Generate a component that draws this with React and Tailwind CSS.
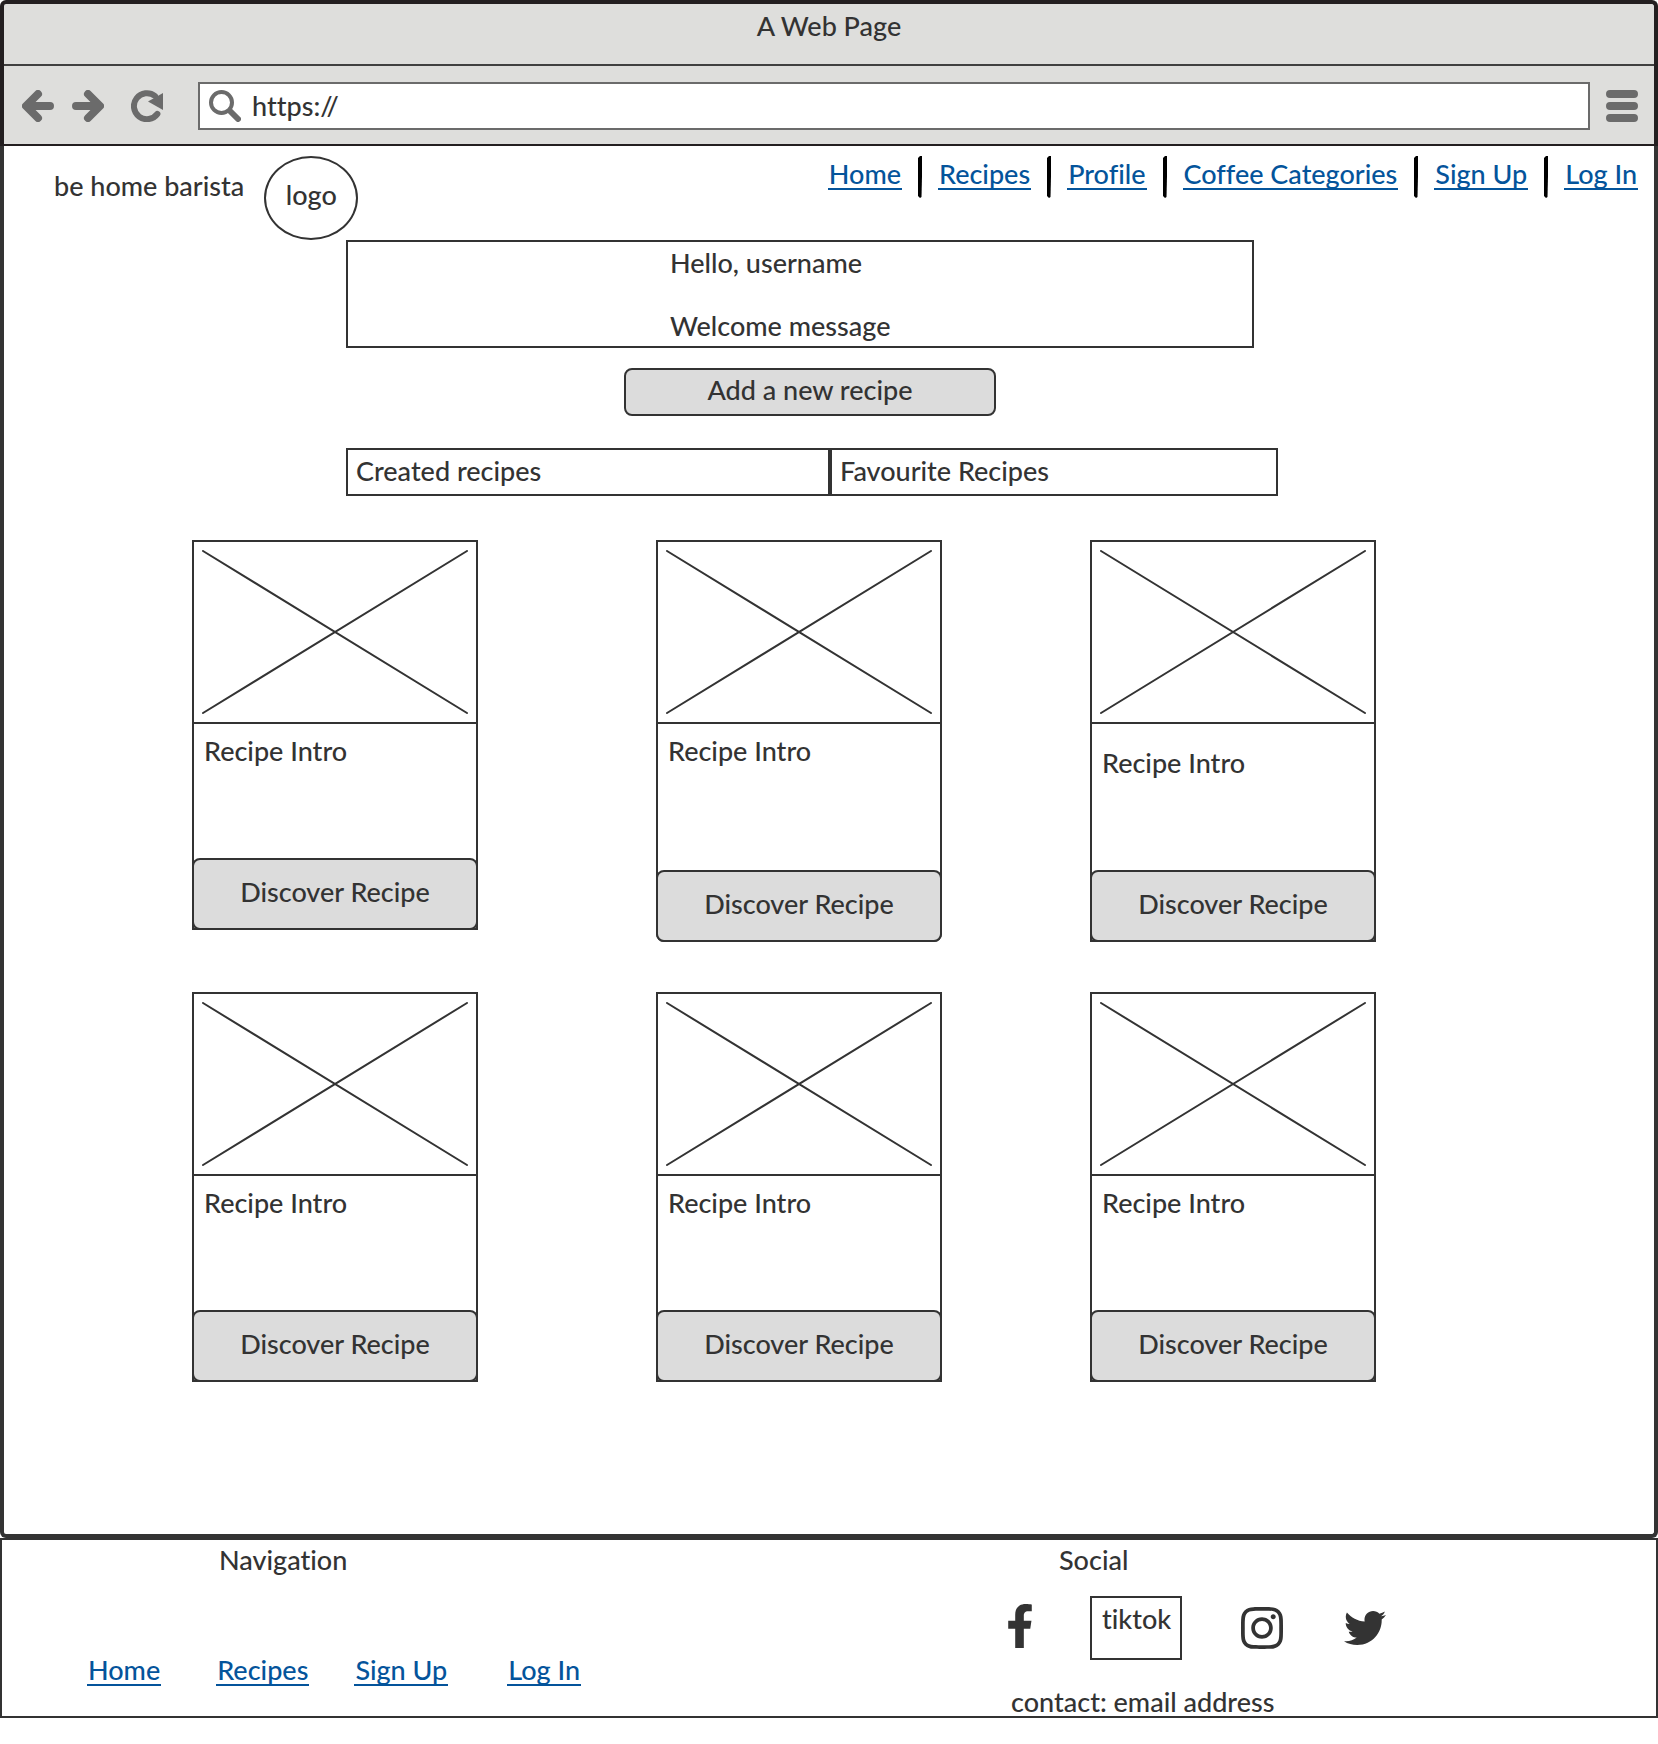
import { FaFacebookF, FaInstagram, FaTwitter } from "react-icons/fa";

const headerLinks = ["Home", "Recipes", "Profile", "Coffee Categories", "Sign Up", "Log In"];

const cards = [
  { place: "col-start-2", size: "h-[390px]", intro: "pt-[11px]", corners: "" },
  { place: "col-start-4", size: "h-[402px]", intro: "pt-[11px]", corners: "rounded-b-lg" },
  { place: "col-start-6", size: "h-[402px]", intro: "pt-[23px]", corners: "" },
  { place: "col-start-2", size: "h-[390px]", intro: "pt-[11px]", corners: "" },
  { place: "col-start-4", size: "h-[390px]", intro: "pt-[11px]", corners: "" },
  { place: "col-start-6", size: "h-[390px]", intro: "pt-[11px]", corners: "" },
];

function TextLink({ children, className = "" }) {
  return (
    <a
      href="#"
      className={`block whitespace-nowrap border-b-2 border-[#04549b] px-px pt-px leading-[29px] text-[#04549b] ${className}`}
    >
      {children}
    </a>
  );
}

function ArrowIcon({ flip }) {
  return (
    <svg width="32" height="32" viewBox="0 0 32 32" className={flip ? "-scale-x-100" : ""} aria-hidden="true">
      <path d="M16 4 4 16l12 12M5 16h23" fill="none" stroke="#6b6b6b" strokeWidth="8" strokeLinecap="round" strokeLinejoin="round" />
    </svg>
  );
}

function ReloadIcon() {
  return (
    <svg width="32" height="32" viewBox="0 0 32 32" aria-hidden="true">
      <path d="M26.400 23.900A13 13 0 1 1 24 6" fill="none" stroke="#6b6b6b" strokeWidth="6" strokeLinecap="round" />
      <path d="M32 3v17L17 11.500z" fill="#6b6b6b" />
    </svg>
  );
}

function SearchIcon() {
  return (
    <svg width="32" height="32" viewBox="0 0 32 32" className="shrink-0" aria-hidden="true">
      <circle cx="12.500" cy="12.500" r="10.500" fill="none" stroke="#6b6b6b" strokeWidth="4" />
      <path d="m21 21 8 8" fill="none" stroke="#6b6b6b" strokeWidth="6" strokeLinecap="round" />
    </svg>
  );
}

function MenuIcon() {
  return (
    <svg width="32" height="32" viewBox="0 0 32 32" aria-hidden="true">
      <path d="M4 4h24M4 16h24M4 28h24" stroke="#6b6b6b" strokeWidth="8" strokeLinecap="round" />
    </svg>
  );
}

function Separator() {
  return (
    <svg width="4" height="42" viewBox="0 0 4 42" className="mx-4 shrink-0" aria-hidden="true">
      <path d="M0 2 2 0h2v20L3.500 41 2 42 0 40z" fill="#000" />
    </svg>
  );
}

function RecipeCard({ place, size, intro, corners }) {
  return (
    <article className={`flex flex-col border-2 border-[#333] ${place} ${size} ${corners}`}>
      <div className="border-b-2 border-[#333] p-2">
        <svg viewBox="0 0 266 164" preserveAspectRatio="none" className="block h-[164px] w-full" role="img" aria-label="Recipe picture">
          <path d="M1 1 265 163M265 1 1 163" fill="none" stroke="#333" strokeWidth="2" strokeLinecap="round" />
        </svg>
      </div>
      <p className={`grow pl-2.5 ${intro}`}>Recipe Intro</p>
      <div className="-mx-0.5 -mb-0.5">
        <button type="button" className="flex h-[72px] w-full justify-center rounded-lg border-2 border-[#333] bg-[#dcdcdc] pt-4">
          Discover Recipe
        </button>
      </div>
    </article>
  );
}

export default function App() {
  return (
    <div className="bg-white font-['Lato',sans-serif] text-[27px] leading-8 font-medium text-[#333] [font-variant-ligatures:none]">
      <div className="rounded-t-md border-4 border-b-0 border-[#231f20] bg-[#dededc]">
        <div className="h-[62px] border-b-2 border-[#404040] pt-1.5 text-center">A Web Page</div>
        <div className="flex h-20 items-center border-b-2 border-[#231f20] pt-0.5 pr-4 pl-[18px]">
          <button type="button" aria-label="Back"><ArrowIcon /></button>
          <button type="button" aria-label="Forward" className="ml-[18px]"><ArrowIcon flip /></button>
          <button type="button" aria-label="Reload" className="ml-[27px]"><ReloadIcon /></button>
          <label className="ml-[35px] flex h-12 grow items-center border-2 border-[#6b6b6b] bg-white pl-[9px]">
            <SearchIcon />
            <input type="text" aria-label="Address" defaultValue="https://" className="ml-[11px] w-full min-w-0 outline-none" />
          </label>
          <button type="button" aria-label="Menu" className="ml-4"><MenuIcon /></button>
        </div>
      </div>

      <div className="rounded-b-md border-4 border-t-0 border-[#333] pb-[152px]">
        <header className="flex h-[94px] items-start pr-4 pl-[50px]">
          <p className="pt-6 whitespace-nowrap">be home barista</p>
          <div className="mt-2.5 ml-5 flex h-[84px] w-[94px] shrink-0 justify-center rounded-[50%] border-2 border-[#333] pt-[21px]">logo</div>
          <nav className="mt-2.5 ml-auto flex">
            {headerLinks.map((label, i) => (
              <div key={label} className="flex items-start">
                {i > 0 && <Separator />}
                <TextLink className="mt-0.5">{label}</TextLink>
              </div>
            ))}
          </nav>
        </header>

        <main>
          <section className="grid grid-cols-[342fr_908fr_400fr]">
            <div className="col-start-2 flex h-[108px] flex-col gap-[31px] border-2 border-[#333] pt-[5px] pl-[322px]">
              <h1>Hello, username</h1>
              <p>Welcome message</p>
            </div>
          </section>

          <div className="mt-5 grid grid-cols-[620fr_372fr_658fr]">
            <button type="button" className="col-start-2 flex h-12 justify-center rounded-lg border-2 border-[#333] bg-[#dcdcdc] pt-1">
              Add a new recipe
            </button>
          </div>

          <div className="mt-8 grid grid-cols-[342fr_484fr_448fr_376fr]">
            <button type="button" className="col-start-2 flex h-12 border-2 border-[#333] pt-[5px] pl-2">Created recipes</button>
            <button type="button" className="col-start-3 flex h-12 border-2 border-[#333] pt-[5px] pl-2">Favourite Recipes</button>
          </div>

          <section className="mt-11 grid grid-cols-[188fr_286fr_178fr_286fr_148fr_286fr_278fr] items-start gap-y-[50px]">
            {cards.map((card, i) => (
              <RecipeCard key={i} {...card} />
            ))}
          </section>
        </main>
      </div>

      <footer className="grid grid-cols-[1004fr_650fr] border-2 border-[#333]">
        <div className="pt-1">
          <h2 className="pl-[217px]">Navigation</h2>
          <nav className="mt-[78px] flex pl-[85px]">
            <TextLink>Home</TextLink>
            <TextLink className="ml-[55px]">Recipes</TextLink>
            <TextLink className="ml-[45px]">Sign Up</TextLink>
            <TextLink className="ml-[59px]">Log In</TextLink>
          </nav>
        </div>
        <div className="pt-1">
          <h2 className="pl-[53px]">Social</h2>
          <div className="mt-5 flex items-center">
            <a href="#" aria-label="Facebook" className="pb-1"><FaFacebookF className="h-11 w-7" /></a>
            <a href="#" className="ml-14 block h-16 w-[92px] border-2 border-[#333] pt-[5px] pl-2.5">tiktok</a>
            <a href="#" aria-label="Instagram" className="ml-14"><FaInstagram className="size-12" /></a>
            <a href="#" aria-label="Twitter" className="ml-[58px]"><FaTwitter className="size-[42px]" /></a>
          </div>
          <p className="mt-7 pl-[5px] leading-7">contact: email address</p>
        </div>
      </footer>
    </div>
  );
}
